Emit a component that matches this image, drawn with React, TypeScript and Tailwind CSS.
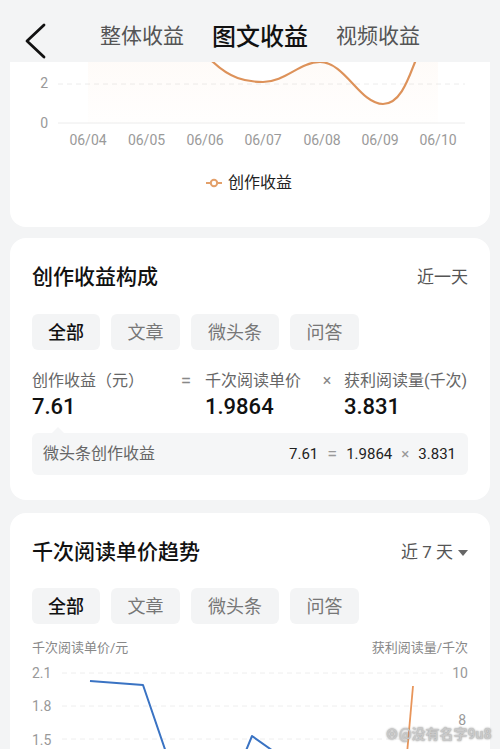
import React from 'react';

const chips = [
  { label: '全部', w: 'w-[68px]', active: true },
  { label: '文章', w: 'w-[69px]', active: false },
  { label: '微头条', w: 'w-[88px]', active: false },
  { label: '问答', w: 'w-[69px]', active: false },
];

const dates = ['06/04', '06/05', '06/06', '06/07', '06/08', '06/09', '06/10'];
const dateX = [88, 146.5, 205, 263, 322, 380, 438];

const Chips: React.FC = () => (
  <div className="flex gap-[11px]">
    {chips.map((c) => (
      <div
        key={c.label}
        className={`${c.w} h-9 rounded-md bg-[#f3f4f5] flex items-center justify-center text-[18px] ${
          c.active ? 'text-[#111] font-medium' : 'text-[#777]'
        }`}
      >
        {c.label}
      </div>
    ))}
  </div>
);

const IncomeChart: React.FC = () => (
  <svg width="480" height="90" viewBox="10 62 480 90" className="block">
    <defs>
      <linearGradient id="fillOrange" x1="0" y1="0" x2="0" y2="1">
        <stop offset="0%" stopColor="#f3a261" stopOpacity="0.07" />
        <stop offset="100%" stopColor="#f3a261" stopOpacity="0.01" />
      </linearGradient>
    </defs>
    <line x1="58" y1="84" x2="465" y2="84" stroke="#ececec" strokeDasharray="5 4" />
    <line x1="58" y1="123" x2="465" y2="123" stroke="#ececec" />
    <text x="48" y="88" textAnchor="end" fontSize="14" fill="#999">2</text>
    <text x="48" y="128" textAnchor="end" fontSize="14" fill="#999">0</text>
    <path
      d="M88,20 C110,20 125,10 146.5,10 C175,10 190,35 213,62 C230,78 245,82 263,82 C285,82 300,62 320,62 C345,62 360,104 383,104 C400,104 408,80 415,62 C425,40 432,30 438,25 L438,123 L88,123 Z"
      fill="url(#fillOrange)"
    />
    <path
      d="M190,35 C200,48 206,56 213,62 C230,78 245,82 263,82 C285,82 300,62 320,62 C345,62 360,104 383,104 C400,104 408,80 415,62 C420,52 425,45 430,38"
      fill="none"
      stroke="#dd925a"
      strokeWidth="2.2"
    />
    {dates.map((d, i) => (
      <text key={d} x={dateX[i]} y="145" textAnchor="middle" fontSize="14" fill="#9a9a9a">
        {d}
      </text>
    ))}
  </svg>
);

const PriceChart: React.FC = () => (
  <svg width="480" height="100" viewBox="10 658 480 100" className="block">
    {[673, 706, 739].map((y) => (
      <line key={y} x1="62" y1={y} x2="443" y2={y} stroke="#eeeeee" strokeDasharray="5 4" />
    ))}
    <text x="32" y="678" fontSize="14" fill="#999">2.1</text>
    <text x="32" y="711" fontSize="14" fill="#999">1.8</text>
    <text x="32" y="745" fontSize="14" fill="#999">1.5</text>
    <text x="468" y="678" textAnchor="end" fontSize="14" fill="#999">10</text>
    <text x="466" y="725" textAnchor="end" fontSize="14" fill="#999">8</text>
    <path
      d="M90,681 L143,685 L170,764 M238,770 L252,736 L290,763"
      fill="none"
      stroke="#3a73c3"
      strokeWidth="2"
      strokeLinejoin="round"
    />
    <path d="M413,686 L406,765" fill="none" stroke="#e8955a" strokeWidth="1.8" />
  </svg>
);

const App: React.FC = () => {
  return (
    <div className="w-[500px] h-[749px] overflow-hidden bg-[#f3f4f5] font-['Roboto','Noto_Sans_CJK_SC',sans-serif] relative">
      {/* 顶部导航 */}
      <div className="h-[62px] flex items-start">
        <svg width="22" height="36" viewBox="0 0 22 36" className="ml-[24px] mt-[23px]">
          <path d="M20,2 L3,18 L20,34" fill="none" stroke="#111" strokeWidth="2.8" strokeLinecap="round" strokeLinejoin="round" />
        </svg>
        <div className="ml-[54px] mt-[21px] h-[32px] flex items-center gap-[28px]">
          <span className="text-[21px] text-[#555]">整体收益</span>
          <span className="text-[24px] text-[#111] font-medium">图文收益</span>
          <span className="text-[21px] text-[#555]">视频收益</span>
        </div>
      </div>

      <div className="px-[10px] flex flex-col">
        {/* 收益趋势卡片 */}
        <div className="bg-white rounded-b-2xl h-[165px]">
          <IncomeChart />
          <div className="mt-[20px] flex items-center justify-center gap-[6px] -ml-[2px]">
            <svg width="16" height="10" viewBox="0 0 16 10">
              <line x1="0" y1="5" x2="16" y2="5" stroke="#e3a06a" strokeWidth="2" />
              <circle cx="8" cy="5" r="3.2" fill="#fff" stroke="#e3a06a" strokeWidth="2" />
            </svg>
            <span className="text-[16px] text-[#222] leading-[22px]">创作收益</span>
          </div>
        </div>

        {/* 创作收益构成 */}
        <div className="mt-[11px] bg-white rounded-2xl px-[22px] pt-[27px] pb-[25px]">
          <div className="flex items-center justify-between h-[26px]">
            <span className="text-[21px] text-[#111] font-medium">创作收益构成</span>
            <span className="text-[17px] text-[#555]">近一天</span>
          </div>
          <div className="mt-[23px]">
            <Chips />
          </div>
          <div className="mt-[20px] flex">
            <div className="w-[140px] flex flex-col">
              <span className="text-[16px] text-[#666] leading-[22px]">创作收益（元）</span>
              <span className="text-[22px] text-[#111] font-medium leading-[30px]">7.61</span>
            </div>
            <div className="w-[28px] text-center text-[19px] text-[#888] leading-[22px]">=</div>
            <div className="ml-[5px] w-[105px] flex flex-col">
              <span className="text-[16px] text-[#666] leading-[22px]">千次阅读单价</span>
              <span className="text-[22px] text-[#111] font-medium leading-[30px]">1.9864</span>
            </div>
            <div className="w-[34px] text-center text-[16px] text-[#888] leading-[22px]">×</div>
            <div className="flex flex-col">
              <span className="text-[16px] text-[#666] leading-[22px] whitespace-nowrap">获利阅读量(千次)</span>
              <span className="text-[22px] text-[#111] font-medium leading-[30px]">3.831</span>
            </div>
          </div>
          <div className="relative mt-[11px] h-[42px] rounded-md bg-[#f5f6f7] flex items-center justify-between pl-[11px] pr-[12px]">
            <div className="absolute -top-[6px] left-[20px] w-0 h-0 border-l-[6px] border-r-[6px] border-b-[6px] border-l-transparent border-r-transparent border-b-[#f5f6f7]" />
            <span className="text-[16px] text-[#666]">微头条创作收益</span>
            <div className="flex items-center gap-[9px] text-[15px] text-[#222]">
              <span>7.61</span>
              <span className="text-[#999] text-[18px] leading-none">=</span>
              <span>1.9864</span>
              <span className="text-[#999] text-[15px]">×</span>
              <span>3.831</span>
            </div>
          </div>
        </div>

        {/* 千次阅读单价趋势 */}
        <div className="mt-[13px] bg-white rounded-t-2xl px-[22px] pt-[27px] h-[300px]">
          <div className="flex items-center justify-between h-[26px]">
            <span className="text-[21px] text-[#111] font-medium">千次阅读单价趋势</span>
            <span className="flex items-center gap-[5px] text-[17px] text-[#555]">
              近 7 天
              <svg width="10" height="6" viewBox="0 0 10 6">
                <path d="M0,0 L10,0 L5,6 Z" fill="#666" />
              </svg>
            </span>
          </div>
          <div className="mt-[22px]">
            <Chips />
          </div>
          <div className="mt-[15px] flex items-center justify-between text-[13px] text-[#888] leading-[18px]">
            <span>千次阅读单价/元</span>
            <span>获利阅读量/千次</span>
          </div>
          <div className="-mx-[22px] mt-[1px]">
            <PriceChart />
          </div>
        </div>
      </div>

      {/* 水印 */}
      <div className="absolute left-[385px] top-[724px] text-[14px] font-bold text-[#c9c9c9] [text-shadow:0_0_2px_#888] whitespace-nowrap">
        ⊗@没有名字9u8
      </div>
    </div>
  );
};

export default App;
